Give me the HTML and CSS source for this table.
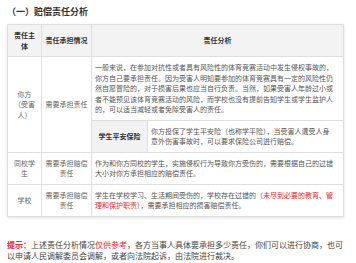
FILE: index.html
```
<!DOCTYPE html>
<html lang="zh-CN">
<head>
<meta charset="utf-8">
<title>赔偿责任分析</title>
<link rel="stylesheet" href="styles.css">
</head>
<body>
<div class="page">
  <h2 class="title">（一）赔偿责任分析</h2>
  <table class="liab">
    <colgroup><col class="c1"><col class="c2"><col class="c3"><col class="c4"></colgroup>
    <thead>
      <tr><th>责任主<br>体</th><th>责任承担情况</th><th colspan="2">责任分析</th></tr>
    </thead>
    <tbody>
      <tr>
        <td class="ctr" rowspan="2">你方<br>（受害<br>人）</td>
        <td class="ctr" rowspan="2">需要承担责任</td>
        <td colspan="2">一般来说，在参加对抗性或者具有风险性的体育竞赛活动中发生侵权事故的，<br>你方自己要承担责任。因为受害人明知要参加的体育竞赛具有一定的风险性仍<br>然自愿冒险的，对于损害后果也应当自行负责。当然，如果受害人年龄过小或<br>者不能预见该体育竞赛活动的风险，而学校也没有提前告知学生或学生监护人<br>的，可以适当减轻或者免除受害人的责任。</td>
      </tr>
      <tr>
        <th class="sub">学生平安保险</th>
        <td>你方投保了学生平安险（也称学平险），当受害人遭受人身<br>意外伤害事故时，可以要求保险公司进行赔偿。</td>
      </tr>
      <tr>
        <td class="ctr">同校学<br>生</td>
        <td class="ctr">需要承担赔偿<br>责任</td>
        <td colspan="2">作为和你方同校的学生，实施侵权行为导致你方受伤的，需要根据自己的过错<br>大小对你方承担相应的赔偿责任。</td>
      </tr>
      <tr>
        <td class="ctr">学校</td>
        <td class="ctr">需要承担赔偿<br>责任</td>
        <td colspan="2">学生在学校学习、生活期间受伤的，学校存在过错的（<span class="red">未尽到必要的教育、管<br>理和保护职责</span>），需要承担相应的损害赔偿责任。</td>
      </tr>
    </tbody>
  </table>
  <p class="tip"><b class="red">提示：</b>上述责任分析情况<span class="red">仅供参考</span>，各方当事人具体要承担多少责任，你们可以进行协商，也可<br>以申请人民调解委员会调解，或者向法院起诉，由法院进行裁决。</p>
</div>
</body>
</html>
```
FILE: styles.css
```
html, body {
  margin: 0;
  padding: 0;
  background: #fff;
}
.page {
  padding: 5px 0 0 7px;
  font-family: "Noto Sans CJK SC", "Noto Sans", sans-serif;
  color: #555;
}
.title {
  margin: 0 0 6px 0;
  font-size: 9px;
  line-height: 13px;
  font-weight: bold;
  color: #333;
}
.liab {
  width: 336px;
  table-layout: fixed;
  border-collapse: collapse;
  font-size: 7px;
  line-height: 10.5px;
  box-shadow: 0 1px 3px rgba(0,0,0,0.12);
}
.c1 { width: 34px; }
.c2 { width: 50px; }
.c3 { width: 56px; }
.c4 { width: 196px; }
.liab th, .liab td {
  border: 1px solid #dedede;
  padding: 5px 3px;
  vertical-align: middle;
  text-align: left;
  white-space: nowrap;
  overflow: hidden;
}
.liab thead th {
  background: #f3f3f3;
  color: #333;
  font-weight: bold;
  text-align: center;
}
.liab th.sub {
  background: #f2f2f2;
  color: #333;
  font-weight: bold;
  text-align: center;
}
.liab td {
  color: #555;
}
.liab td.ctr {
  text-align: center;
  color: #666;
}
.red {
  color: #f5222d;
}
.tip {
  margin: 22px 0 0 0;
  width: 340px;
  font-size: 8px;
  line-height: 11px;
  color: #444;
  white-space: nowrap;
}
.tip b {
  font-weight: bold;
}
```
